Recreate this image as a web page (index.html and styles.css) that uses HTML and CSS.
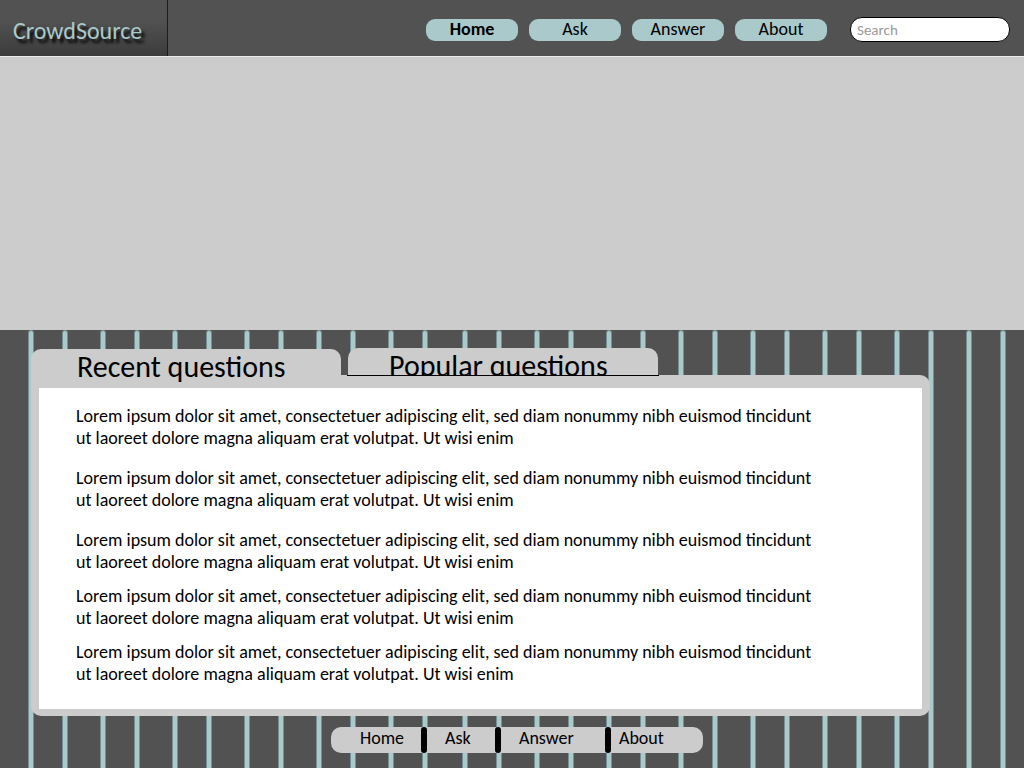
FILE: index.html
```html
<!DOCTYPE html>
<html lang="en">
<head>
<meta charset="utf-8">
<meta name="viewport" content="width=device-width, initial-scale=1">
<title>CrowdSource</title>
<link rel="stylesheet" href="styles.css">
</head>
<body>
<header class="site-header">
  <a class="logo" href="#">CrowdSource</a>
  <nav class="main-nav" aria-label="Main">
    <a class="pill current" href="#" aria-current="page">Home</a>
    <a class="pill" href="#">Ask</a>
    <a class="pill" href="#">Answer</a>
    <a class="pill" href="#">About</a>
  </nav>
  <form class="search-form" role="search">
    <input class="search" type="search" placeholder="Search" aria-label="Search">
  </form>
</header>
<section class="banner" aria-label="Banner"></section>
<main class="content">
  <svg class="stripes" aria-hidden="true">
    <defs>
      <g id="bar"><rect class="bar-edge" x="-3" width="6" height="2000" rx="3"/><rect x="-2" y="1" width="4" height="2000" rx="2"/></g>
      <g id="pair"><use href="#bar"/><use href="#bar" x="34"/></g>
    </defs>
    <use href="#pair" x="31"/><use href="#pair" x="103"/><use href="#pair" x="175"/>
    <use href="#pair" x="247"/><use href="#pair" x="319"/><use href="#pair" x="391"/>
    <use href="#pair" x="465"/><use href="#pair" x="537"/><use href="#pair" x="609"/>
    <use href="#pair" x="681"/><use href="#pair" x="753"/><use href="#pair" x="825"/>
    <use href="#pair" x="897"/><use href="#pair" x="969"/>
  </svg>
  <div class="panel">
    <div class="tabs" role="tablist">
      <button class="tab selected" type="button" role="tab" aria-selected="true">Recent questions</button>
      <div class="tab-slot"><button class="tab" type="button" role="tab" aria-selected="false">Popular questions</button></div>
    </div>
    <div class="frame" role="tabpanel">
      <div class="questions">
        <p class="question">Lorem ipsum dolor sit amet, consectetuer adipiscing elit, sed diam nonummy nibh euismod tincidunt<br>ut laoreet dolore magna aliquam erat volutpat. Ut wisi enim</p>
        <p class="question">Lorem ipsum dolor sit amet, consectetuer adipiscing elit, sed diam nonummy nibh euismod tincidunt<br>ut laoreet dolore magna aliquam erat volutpat. Ut wisi enim</p>
        <p class="question tight">Lorem ipsum dolor sit amet, consectetuer adipiscing elit, sed diam nonummy nibh euismod tincidunt<br>ut laoreet dolore magna aliquam erat volutpat. Ut wisi enim</p>
        <p class="question tight">Lorem ipsum dolor sit amet, consectetuer adipiscing elit, sed diam nonummy nibh euismod tincidunt<br>ut laoreet dolore magna aliquam erat volutpat. Ut wisi enim</p>
        <p class="question tight">Lorem ipsum dolor sit amet, consectetuer adipiscing elit, sed diam nonummy nibh euismod tincidunt<br>ut laoreet dolore magna aliquam erat volutpat. Ut wisi enim</p>
      </div>
    </div>
  </div>
  <footer class="site-footer">
    <nav class="footer-nav" aria-label="Footer">
      <a class="footer-link home" href="#">Home</a>
      <span class="divider"></span>
      <a class="footer-link ask" href="#">Ask</a>
      <span class="divider"></span>
      <a class="footer-link answer" href="#">Answer</a>
      <span class="divider"></span>
      <a class="footer-link about" href="#">About</a>
    </nav>
  </footer>
</main>
</body>
</html>
```
FILE: styles.css
```css
* { box-sizing: border-box; }
body {
  margin: 0;
  min-height: 100vh;
  display: flex;
  flex-direction: column;
  background: #525252;
  color: #000;
  font-family: Calibri, Carlito, Lato, sans-serif;
  font-size: 18px;
  line-height: 22px;
}
a { color: inherit; text-decoration: none; }
.site-header {
  display: flex;
  align-items: center;
  min-height: 57px;
  border-bottom: 1px solid #ececec;
  padding-right: 14px;
}
.logo {
  width: 168px;
  height: 56px;
  padding: 5px 0 0 13px;
  display: flex;
  align-items: center;
  border-right: 1px solid #1c1c1c;
  background: linear-gradient(#525252 35%, #3c3c3c);
  color: #a9c9ca;
  font-size: 24px;
  text-shadow: 3px 4px 3px #000;
}
.main-nav { display: flex; gap: 11px; margin: 4px 23px 0 auto; }
.pill {
  width: 92px;
  height: 22px;
  border-radius: 9px;
  background: #a9c9ca;
  line-height: 21px;
  text-align: center;
}
.current { font-weight: bold; }
.search-form { display: flex; margin-top: 3px; }
.search {
  width: 160px;
  height: 25px;
  padding: 0 6px;
  border: 1px solid #000;
  border-radius: 12px;
  background: #fff;
  font: inherit;
  font-size: 15px;
  appearance: none;
}
.search::placeholder { color: #999; opacity: 1; }
.banner { height: 273px; background: #ccc; }
.content {
  position: relative;
  isolation: isolate;
  flex: 1;
  padding: 18px 94px 15px 31px;
}
.stripes {
  position: absolute;
  inset: 0;
  width: 100%;
  height: 100%;
  z-index: -1;
  fill: #a9c9ca;
}
.bar-edge { fill: #779091; }
.tabs { display: flex; gap: 6px; height: 27px; align-items: flex-end; }
.tab {
  width: 310px;
  height: 36px;
  padding: 0 0 0 46px;
  border: 0;
  border-radius: 10px 10px 0 0;
  background: #ccc;
  color: #000;
  font: inherit;
  font-size: 30px;
  line-height: 36px;
  text-align: left;
}
.selected { align-self: flex-start; margin-top: 1px; }
.tab-slot {
  height: 28px;
  margin-bottom: -1px;
  padding: 0 1px;
  border-bottom: 1px solid #000;
  overflow: hidden;
  position: relative;
}
.tab-slot .tab { padding-left: 41px; }
.frame {
  padding: 13px 8px 7px;
  border-radius: 0 10px 10px 10px;
  background: #ccc;
}
.questions {
  display: flex;
  flex-direction: column;
  gap: 12px;
  padding: 17px 37px 24px;
  background: #fff;
}
.question { margin: 0; padding-bottom: 6px; }
.tight { padding-bottom: 0; }
.site-footer { display: flex; justify-content: center; padding: 11px 0 0 73px; }
.footer-nav {
  display: flex;
  width: 372px;
  height: 26px;
  border-radius: 10px;
  background: #ccc;
  line-height: 23px;
}
.divider { width: 6px; border-radius: 3px; background: #000; }
.home { width: 90px; padding-left: 29px; }
.ask { width: 68px; padding-left: 18px; }
.answer { width: 104px; padding-left: 18px; }
.about { padding-left: 8px; }
```
